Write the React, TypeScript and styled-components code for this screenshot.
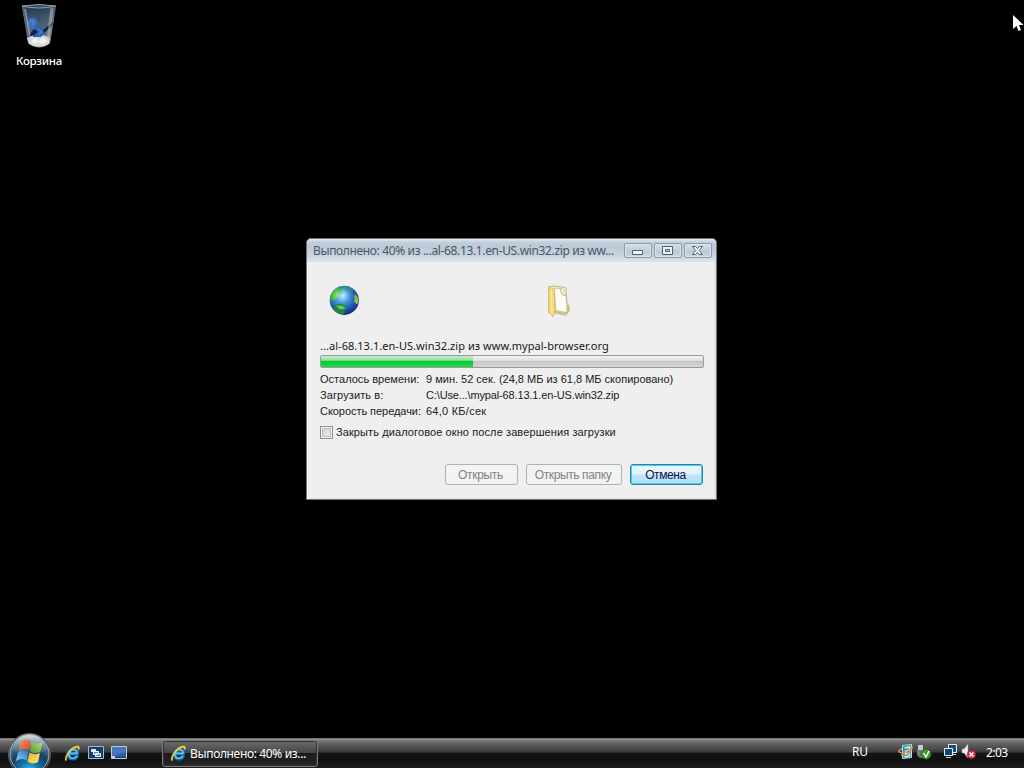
import React from "react";
import styled, { createGlobalStyle } from "styled-components";

const Global = createGlobalStyle`
  * { box-sizing: border-box; }
  body { margin: 0; background: #000; overflow: hidden; }
`;

const ui = `"Noto Sans", "Open Sans", sans-serif`;
const classic = `"Liberation Sans", Arial, sans-serif`;

const Desktop = styled.div`
  position: relative;
  width: 1024px;
  height: 768px;
  display: flex;
  flex-direction: column;
  background: #000;
  font-family: ${ui};
  font-size: 12px;
  cursor: default;
  user-select: none;
`;
const Wallpaper = styled.main`
  flex: 1;
`;
const Shortcut = styled.div`
  width: 78px;
  padding-top: 3px;
  display: flex;
  flex-direction: column;
  align-items: center;
`;
const ShortcutLabel = styled.span`
  margin-top: 4px;
  color: #fff;
  font: 500 11.5px/16px ${ui};
  white-space: nowrap;
  letter-spacing: -0.3px;
`;
const Pointer = styled.svg`
  position: absolute;
  left: 1012px;
  top: 14px;
`;

const Dialog = styled.section`
  position: absolute;
  left: 306px;
  top: 238px;
  width: 411px;
  height: 262px;
  border: 1px solid #70767c;
  border-radius: 5px 5px 0 0;
  background: #efefef;
  box-shadow: inset 1px 1px 0 #f6fafd, inset -2px -1px 0 #dce4eb;
  display: flex;
  flex-direction: column;
  overflow: hidden;
`;
const TitleBar = styled.header`
  height: 23px;
  flex: none;
  display: flex;
  align-items: center;
  justify-content: space-between;
  padding: 1px 4px 0 6px;
  background: linear-gradient(#e4ebf1 0, #c3cfda 3px, #bccad7 8px, #c8d5e1 17px, #dce5ed 23px);
`;
const Title = styled.span<{ $spacing: number }>`
  color: #4c5664;
  font: 12px/18px ${ui};
  white-space: nowrap;
  letter-spacing: ${(p) => p.$spacing}px;
`;
const Controls = styled.div`
  flex: none;
  display: flex;
  gap: 2px;
  padding-bottom: 1px;
`;
const Control = styled.button`
  width: 28px;
  height: 15px;
  padding: 0 1px 0 0;
  border: 1px solid #8b9bab;
  border-radius: 2px;
  background: linear-gradient(#d3dde7, #c1ceda 50%, #b9c8d6 51%, #cbd8e4);
  box-shadow: inset 0 0 0 1px #dae4ec;
  display: flex;
  align-items: center;
  justify-content: center;
`;
const Body = styled.div`
  flex: 1;
  padding: 22px 12px 14px 13px;
  display: flex;
  flex-direction: column;
`;
const Transfer = styled.div`
  height: 36px;
  display: flex;
  padding-left: 8px;
  gap: 184px;
`;
const FileName = styled.div`
  margin-top: 17px;
  height: 18px;
  color: #161616;
  font: 11px/17px ${ui};
  letter-spacing: 0.04px;
  white-space: nowrap;
`;
const Track = styled.div`
  height: 13px;
  border: 1px solid #9a9a9a;
  border-radius: 2px;
  background: linear-gradient(#f2f2f2, #dedede 45%, #c6c6c6 50%, #d6d6d6);
  overflow: hidden;
`;
const Fill = styled.div`
  height: 100%;
  background: linear-gradient(#c3efca, #8fdf9c 40%, #12c638 45%, #0fd23c 75%, #2ad85a);
`;
const Facts = styled.dl`
  margin: 3px 0 0;
  display: grid;
  grid-template-columns: 106px 1fr;
  grid-auto-rows: 16px;
  color: #202020;
  font: 11px/16px ${classic};
  white-space: nowrap;
`;
const Term = styled.dt<{ $spacing: number }>`
  letter-spacing: ${(p) => p.$spacing}px;
`;
const Value = styled.dd<{ $spacing: number }>`
  margin: 0;
  letter-spacing: ${(p) => p.$spacing}px;
`;
const Option = styled.label`
  margin-top: 5px;
  height: 16px;
  display: flex;
  align-items: center;
  gap: 3px;
  color: #202020;
  font: 11px/16px ${classic};
  letter-spacing: 0.1px;
  white-space: nowrap;
`;
const Box = styled.span`
  width: 13px;
  height: 13px;
  border: 1px solid #8e8f8f;
  background: linear-gradient(135deg, #c8ccd0, #f2f3f4);
  box-shadow: inset 0 0 0 1px #f4f4f4, inset 0 0 0 2px #b9bec4;
`;
const Actions = styled.footer`
  margin-top: auto;
  display: flex;
  justify-content: flex-end;
  gap: 8px;
  padding-right: 1px;
`;
const Action = styled.button<{ $width: number; $primary?: boolean; $spacing: number }>`
  width: ${(p) => p.$width}px;
  height: 21px;
  padding: 0 2px 0 0;
  border: 1px solid ${(p) => (p.$primary ? "#2b84a5" : "#adb2b5")};
  border-radius: 3px;
  background: ${(p) => (p.$primary ? "linear-gradient(#eef8fc, #dff1fa 48%, #bfe5f7 52%, #b3e0f5)" : "#f2f3f3")};
  box-shadow: ${(p) => (p.$primary ? "inset 0 0 0 1px #45cff2" : "none")};
  color: ${(p) => (p.$primary ? "#10144c" : "#838383")};
  font: 12px/18px ${classic};
  letter-spacing: ${(p) => p.$spacing}px;
  white-space: nowrap;
`;

const Taskbar = styled.nav`
  height: 30px;
  flex: none;
  display: flex;
  align-items: center;
  color: #fff;
  background: linear-gradient(#555 0, #969696 1px, #727272 3px, #555 8px, #3c3c3c 14px, #151515 15px, #101010 22px, #1c1c1c 30px);
`;
const StartSlot = styled.div`
  position: relative;
  width: 64px;
  height: 30px;
`;
const Orb = styled.svg`
  position: absolute;
  left: 7px;
  top: -6px;
`;
const QuickLaunch = styled.div`
  width: 98px;
  display: flex;
  align-items: center;
  gap: 7px;
`;
const TaskButton = styled.div`
  width: 156px;
  height: 27px;
  margin-top: 1px;
  padding-left: 7px;
  border: 1px solid #77797a;
  border-radius: 3px;
  background: linear-gradient(#6c6c6c, #454545 48%, #1b1b1b 50%, #252525);
  box-shadow: inset 0 0 0 1px #333;
  display: flex;
  align-items: center;
  gap: 3px;
  font: 12px/17px ${ui};
  letter-spacing: -0.35px;
  white-space: nowrap;
`;
const Tray = styled.div`
  margin-left: auto;
  height: 30px;
  display: flex;
  align-items: center;
  padding-right: 16px;
  padding-bottom: 3px;
`;
const Language = styled.span`
  width: 46px;
  font: 12px/18px ${ui};
  letter-spacing: -0.3px;
`;
const TrayIcons = styled.div`
  display: flex;
  margin-right: 9px;
`;
const TrayGap = styled.span`
  width: 9px;
`;
const Clock = styled.time`
  width: 22px;
  padding-top: 3px;
  font: 12px/18px ${ui};
  letter-spacing: -0.6px;
`;

const RecycleBin = () => (
  <svg width="40" height="46" viewBox="0 0 40 46">
    <defs>
      <linearGradient id="glass" x1="0" x2="1">
        <stop offset="0" stopColor="#b5c0c8" />
        <stop offset=".14" stopColor="#33475c" />
        <stop offset=".5" stopColor="#27425f" />
        <stop offset=".75" stopColor="#46525e" />
        <stop offset=".93" stopColor="#9aa1a6" />
        <stop offset="1" stopColor="#59636b" />
      </linearGradient>
      <linearGradient id="haze" x1="0" y1="0" x2="0" y2="1">
        <stop offset="0" stopColor="#1c3450" stopOpacity=".7" />
        <stop offset="1" stopColor="#aeb4b8" stopOpacity=".45" />
      </linearGradient>
    </defs>
    <path d="M3 3 9 40q11 9 22 0l6-37Z" fill="url(#glass)" />
    <path d="M3 3 9 40q11 9 22 0l6-37Z" fill="url(#haze)" />
    <path d="M8 35q12-7 23 0l-1 6q-10 6-20 0Z" fill="#d9dada" />
    <path d="m12 38 4-3 4 3 4-3 4 3-4 3-5-2-4 2Z" fill="#f2f2f0" />
    <path d="m8 20 3-5 5 0 3 5-3 3 1 4-5-1Z" fill="#3b72c9" />
    <path d="m18 24 5 0 3 6-4 4-8 0 0-4Z" fill="#2d61b7" />
    <path d="m10 32 5-6 4 3-4 3-5 2Zm14-5 10-8-2 5-7 6Z" fill="#101f42" />
    <path d="m11 17 4 2-2 3m6 4 4 3-4 3" fill="none" stroke="#5e8fd8" />
    <path d="M6 6 12 39" stroke="#cbd2d6" strokeOpacity=".5" strokeWidth="1.5" />
    <path d="M33 5 29 37" stroke="#c4cacd" strokeOpacity=".45" strokeWidth="3" />
    <path d="M3 3Q20 0 37 3 20 7 3 3Z" fill="#354b63" stroke="#929fa8" />
  </svg>
);

const Globe = () => (
  <svg width="34" height="34" viewBox="0 0.500 34 34">
    <defs>
      <radialGradient id="sea" cx=".42" cy=".35" r=".66">
        <stop offset="0" stopColor="#a4e0f5" />
        <stop offset=".35" stopColor="#4b9fdb" />
        <stop offset=".72" stopColor="#2155bd" />
        <stop offset="1" stopColor="#182a78" />
      </radialGradient>
      <radialGradient id="land" cx=".55" cy=".6" r=".65">
        <stop offset="0" stopColor="#a2ec6c" />
        <stop offset=".5" stopColor="#58c355" />
        <stop offset="1" stopColor="#238f3c" />
      </radialGradient>
      <radialGradient id="glow">
        <stop offset="0" stopColor="#c5f0fa" stopOpacity=".85" />
        <stop offset="1" stopColor="#6fc4ec" stopOpacity="0" />
      </radialGradient>
    </defs>
    <circle cx="16.3" cy="16.800" r="14.600" fill="url(#sea)" />
    <path d="M2 15Q4 5 12 3l4 1-3 3 1 3-4 2-2 4-6 2Z" fill="url(#land)" />
    <path d="M17 3q4-.5 8 3l-2 1-3-2-2 2Z" fill="#308e67" />
    <path d="m26 7 3 4-2 1-2-3Z" fill="#245f74" />
    <path d="m28 11 2 4q1 4-1 6l-3-3 1-3-1-2Z" fill="#8ec23d" />
    <path d="M6 22q5-3 9-1l5 3-3 2-1 5Q9 31 6 26Z" fill="#208447" />
    <path d="m8 22 6 0 4 3-6 1Z" fill="#69c65c" />
    <circle cx="15" cy="12" r="7" fill="url(#glow)" />
  </svg>
);

const Folder = () => (
  <svg width="26" height="36" viewBox="0 0 26 34" preserveAspectRatio="none">
    <defs>
      <linearGradient id="manila" x1="0" x2="1">
        <stop offset="0" stopColor="#e8c65b" />
        <stop offset=".45" stopColor="#fae798" />
        <stop offset="1" stopColor="#efcd64" />
      </linearGradient>
    </defs>
    <path d="M3 2.500 10 2l10 1.500 1 15 2 2v5l-3 4-11-2Z" fill="#f5edb9" stroke="#b7ae73" strokeWidth=".8" />
    <path d="m8 4 8 0 4 5 1 18-11-2Z" fill="#fcfcf5" stroke="#c1b987" strokeWidth=".8" />
    <path d="m14 4 2 6 4 1" fill="#eceada" stroke="#aaa994" strokeWidth=".8" />
    <path d="M2.500 3 8 5l1 21-2 5-2-3-2.500-1Z" fill="url(#manila)" stroke="#d2b85e" strokeWidth=".8" />
    <path d="m9 26 10 2 3-2v-6" fill="none" stroke="#aaa574" strokeWidth=".9" />
  </svg>
);

const Explorer = () => (
  <svg width="17" height="17" viewBox="0 0 17 17">
    <path d="M13.500 10.500Q12 14 8.500 14C5 14 3.500 11.500 4 8.500S7 4 9.500 4s4.500 2 4 4.800H5.500" fill="none" stroke="#1769b5" strokeWidth="3.2" />
    <path d="M13 11Q11 13.500 8 13.200 4.500 12 5 8.500 6 5 9 4.500 13 4.500 13 8.300H6" fill="none" stroke="#59c6f5" strokeWidth="1.7" />
    <path d="M2.500 15.500Q.5 13.500 4 8.500 9 1.500 14 1.500q1.500.5.500 3" fill="none" stroke="#f0cb2e" strokeWidth="1.800" />
  </svg>
);

const Switcher = () => (
  <svg width="16" height="14" viewBox="0 0 16 14">
    <path d="M.5.5h15v12H.5Z" fill="#163d6d" stroke="#a6bacd" />
    <path d="M3 3h5v3H3Z" fill="#dcebf8" />
    <path d="M5.500 5.500h5v3h-5Zm2 2h5v3h-5Z" fill="#5589bc" stroke="#f1f8ff" />
  </svg>
);

const ShowDesktop = () => (
  <svg width="16" height="14" viewBox="0 0 16 14">
    <path d="M.5.5h15v12H.5Z" fill="#2b5fae" stroke="#b7cbe2" />
    <path d="M1 1h14v5L1 10Z" fill="#4778bd" />
    <path d="M1 11h14v1H1Z" fill="#1d3861" />
    <path d="M1 10h3v2H1Z" fill="#b9d5ee" />
  </svg>
);

const StartOrb = () => (
  <Orb width="45" height="36" viewBox="0 0 45 36">
    <defs>
      <radialGradient id="orb" cx=".5" cy=".95" r=".85">
        <stop offset="0" stopColor="#39c8f0" />
        <stop offset=".3" stopColor="#1674ab" />
        <stop offset=".6" stopColor="#15405f" />
        <stop offset="1" stopColor="#6d8791" />
      </radialGradient>
      <linearGradient id="shine" x1="0" y1="0" x2="0" y2="1">
        <stop offset="0" stopColor="#e3edf0" stopOpacity=".85" />
        <stop offset="1" stopColor="#6a8fa5" stopOpacity=".15" />
      </linearGradient>
      <linearGradient id="red" x1="0" y1="0" x2="1" y2="1">
        <stop offset="0" stopColor="#f09a68" />
        <stop offset="1" stopColor="#d9451d" />
      </linearGradient>
      <linearGradient id="green" x1="0" y1="1" x2="1" y2="0">
        <stop offset="0" stopColor="#56982c" />
        <stop offset="1" stopColor="#b7dd83" />
      </linearGradient>
      <linearGradient id="blue" x1="0" y1="1" x2="1" y2="0">
        <stop offset="0" stopColor="#8ad5f8" />
        <stop offset="1" stopColor="#2671bd" />
      </linearGradient>
      <linearGradient id="gold" x1="0" y1="0" x2="1" y2="1">
        <stop offset="0" stopColor="#f2ad21" />
        <stop offset="1" stopColor="#ffeb76" />
      </linearGradient>
    </defs>
    <circle cx="22.500" cy="22.500" r="21" fill="#20292d" stroke="#60686b" />
    <circle cx="22.500" cy="22" r="19.500" fill="url(#orb)" stroke="#a2b8c2" />
    <path d="M4.500 18Q8.500 3 22.500 3t18 15q-8 4-18 4t-18-4Z" fill="url(#shine)" />
    <path d="M14 9.500q5-4 10-.5l-2 9.500q-5-3-10.500.5Z" fill="url(#red)" />
    <path d="M25 10q5.500 3 10.500 0l-2 9.500q-5.500 3-10.500 0Z" fill="url(#green)" />
    <path d="M11 20q5.500-4 10.500-.5l-2 9q-5-3-10.500.5Z" fill="url(#blue)" />
    <path d="M22.500 20.500q5.500 3 10.500.5l-2 9q-5.500 3-10.500-.5Z" fill="url(#gold)" />
  </Orb>
);

const Safety = () => (
  <svg width="17" height="18" viewBox="0 0 17 18">
    <path d="m4.500 2.500 9-1v13l-9 1Z" fill="#278da0" stroke="#b6e4e6" />
    <path d="m6.500 5 5-1v3l-4 1v3l4-1v3l-5 1" fill="none" stroke="#d7f5f3" strokeWidth="1.500" />
    <path d="M4 6Q0 7 1 9q5 3 13-4-3 9-11 7" fill="none" stroke="#d5956b" strokeWidth="1.300" />
  </svg>
);
const Eject = () => (
  <svg width="19" height="18" viewBox="0 0 19 18">
    <path d="M3 2h5v5H3Z" fill="#c9c9d6" />
    <path d="M2 7h7v8H5l-3-3Z" fill="#777a7b" />
    <circle cx="11" cy="11" r="5" fill="#3c9b2c" stroke="#216b1a" />
    <path d="m8.500 10 2.500 4 3-6" fill="none" stroke="#fff" strokeWidth="1.400" />
  </svg>
);
const Network = () => (
  <svg width="17" height="18" viewBox="0 0 17 18">
    <path d="M5.500 1.500h8v8h-8Z" fill="#164c83" stroke="#e4f0f8" />
    <path d="M1.500 5.500h8v7h-8Z" fill="#12426f" stroke="#e4f0f8" />
    <path d="M3 14.500h5m2-3h3" stroke="#b8d2e5" />
  </svg>
);
const Muted = () => (
  <svg width="17" height="18" viewBox="0 0 17 18">
    <path d="m2 6 2 0 4-5v14l-4-5H2Z" fill="#f1f1f1" stroke="#90979b" strokeWidth=".5" />
    <circle cx="11.500" cy="11.500" r="4.300" fill="#d82936" stroke="#a11923" strokeWidth=".5" />
    <path d="m9.500 9.500 4 4m0-4-4 4" stroke="#fff" strokeWidth="1.500" />
  </svg>
);

const facts = [
  { term: "Осталось времени:", value: "9 мин. 52 сек. (24,8 МБ из 61,8 МБ скопировано)", ts: 0.02, vs: 0 },
  { term: "Загрузить в:", value: "C:\\Use...\\mypal-68.13.1.en-US.win32.zip", ts: 0.1, vs: -0.14 },
  { term: "Скорость передачи:", value: "64,0 КБ/сек", ts: -0.05, vs: 0.25 },
];

export default function App() {
  return (
    <Desktop>
      <Global />
      <Wallpaper>
        <Shortcut>
          <RecycleBin />
          <ShortcutLabel>Корзина</ShortcutLabel>
        </Shortcut>
      </Wallpaper>

      <Dialog>
        <TitleBar>
          <Title $spacing={-0.36}>Выполнено: 40% из ...al-68.13.1.en-US.win32.zip из ww...</Title>
          <Controls>
            <Control aria-label="Свернуть">
              <svg width="13" height="11"><path d="M1.500 5.500h10v4h-10Z" fill="#f4f6f8" stroke="#535e69" /></svg>
            </Control>
            <Control aria-label="Развернуть">
              <svg width="13" height="11"><path d="M1.500 1.500h10v8h-10Z" fill="#eef1f4" stroke="#535e69" /><path d="M4.500 4.500h4v2h-4Z" fill="#c5cfd9" stroke="#535e69" /></svg>
            </Control>
            <Control aria-label="Закрыть">
              <svg width="13" height="11"><path d="M1.500 1.500h3l2 2.200 2-2.200h3L8.300 5.500l3.200 4h-3l-2-2.200-2 2.200h-3l3.200-4Z" fill="#fff" stroke="#535e69" /></svg>
            </Control>
          </Controls>
        </TitleBar>
        <Body>
          <Transfer><Globe /><Folder /></Transfer>
          <FileName>...al-68.13.1.en-US.win32.zip из www.mypal-browser.org</FileName>
          <Track><Fill style={{ width: "39.8%" }} /></Track>
          <Facts>
            {facts.map((f) => (
              <React.Fragment key={f.term}>
                <Term $spacing={f.ts}>{f.term}</Term>
                <Value $spacing={f.vs}>{f.value}</Value>
              </React.Fragment>
            ))}
          </Facts>
          <Option><Box />Закрыть диалоговое окно после завершения загрузки</Option>
          <Actions>
            <Action $width={73} $spacing={-0.3} disabled>Открыть</Action>
            <Action $width={96} $spacing={-0.38} disabled>Открыть папку</Action>
            <Action $width={73} $spacing={-0.4} $primary>Отмена</Action>
          </Actions>
        </Body>
      </Dialog>

      <Taskbar>
        <StartSlot><StartOrb /></StartSlot>
        <QuickLaunch><Explorer /><Switcher /><ShowDesktop /></QuickLaunch>
        <TaskButton><Explorer />Выполнено: 40% из...</TaskButton>
        <Tray>
          <Language>RU</Language>
          <TrayIcons><Safety /><Eject /><TrayGap /><Network /><Muted /></TrayIcons>
          <Clock>2:03</Clock>
        </Tray>
      </Taskbar>

      <Pointer width="12" height="19" viewBox="0 0 12 19">
        <path d="M1 1v14l3.500-3 2 5 2.500-1-2-5h4.500Z" fill="#fff" />
      </Pointer>
    </Desktop>
  );
}
